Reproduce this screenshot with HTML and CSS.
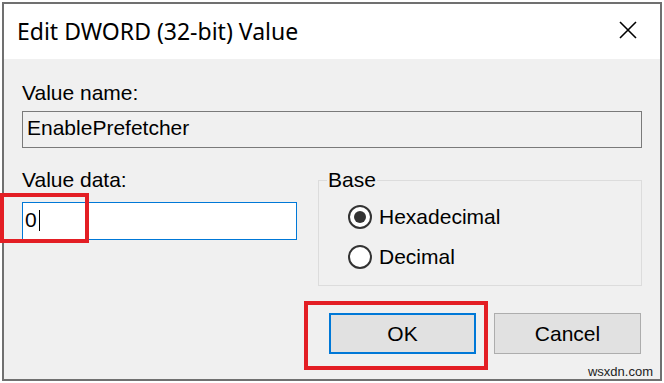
FILE: index.html
```html
<!DOCTYPE html>
<html lang="en">
<head>
  <meta charset="UTF-8">
  <meta name="viewport" content="width=device-width, initial-scale=1.0">
  <title>Edit DWORD (32-bit) Value</title>
  <link rel="stylesheet" href="styles.css">
</head>
<body>
  <div class="window">
    <div class="titlebar">
      <span class="title">Edit DWORD (32-bit) Value</span>
      <svg class="close" width="18" height="18" viewBox="0 0 18 18">
        <path d="M1 1 L17 17 M17 1 L1 17" stroke="#000" stroke-width="1.6" fill="none"/>
      </svg>
    </div>

    <div class="content">
      <div class="label">Value name:</div>
      <div class="namebox">EnablePrefetcher</div>

      <div class="row">
        <div class="datacol">
          <div class="label">Value data:</div>
          <div class="datainput"><span>0</span><span class="caret"></span></div>
        </div>
        <fieldset class="base">
          <legend>Base</legend>
          <div class="radio"><span class="dot checked"></span>Hexadecimal</div>
          <div class="radio"><span class="dot"></span>Decimal</div>
        </fieldset>
      </div>

      <div class="buttons">
        <div class="btn default">OK</div>
        <div class="btn">Cancel</div>
      </div>
    </div>

    <!-- red annotation boxes over the dialog -->
    <div class="mark mark-data"></div>
    <div class="mark mark-ok"></div>
    <div class="watermark">wsxdn.com</div>
  </div>
</body>
</html>
```

FILE: styles.css
```css
body {
  margin: 0;
  background: #fff;
  font-family: 'Liberation Sans', Arial, sans-serif;
  color: #000;
}
.window {
  position: relative;
  margin: 2px 0 0 2px;
  width: 660px;
  height: 379px;
  box-sizing: border-box;
  border: 2px solid #707070;
  background: #f0f0f0;
}
.titlebar {
  height: 55px;
  background: #fff;
  display: flex;
  align-items: center;
  justify-content: space-between;
  padding: 0 23px 0 13px;
}
.title {
  font-family: 'Noto Sans', sans-serif;
  font-size: 23px;
  padding-bottom: 2px;
}
.close {
  margin-bottom: 4px;
}
.content {
  padding: 22px 18px 0 18px;
  font-size: 21px;
}
.label {
  line-height: 24px;
}
.namebox {
  margin-top: 6px;
  height: 37px;
  box-sizing: border-box;
  border: 1px solid #7a7a7a;
  padding: 0 0 3px 4px;
  display: flex;
  align-items: center;
}
.row {
  display: flex;
  align-items: flex-start;
  margin-top: 20px;
}
.datacol {
  width: 275px;
}
.datainput {
  margin-top: 10px;
  height: 38px;
  box-sizing: border-box;
  border: 1px solid #0078d7;
  background: #fff;
  padding: 0 0 2px 2px;
  display: flex;
  align-items: center;
}
.caret {
  display: inline-block;
  width: 1px;
  height: 21px;
  background: #000;
  margin-left: 2px;
}
.base {
  margin: 0 0 0 21px;
  width: 324px;
  box-sizing: border-box;
  border: 1px solid #dcdcdc;
  padding: 13px 0 16px 29px;
  min-width: 0;
}
.base legend {
  padding: 0 1px;
  margin-left: -21px;
  line-height: 24px;
}
.radio {
  display: flex;
  align-items: center;
  height: 24px;
  gap: 7px;
}
.radio + .radio {
  margin-top: 16px;
}
.dot {
  width: 24px;
  height: 24px;
  box-sizing: border-box;
  border: 2px solid #333;
  border-radius: 50%;
  background: #fff;
  display: flex;
  align-items: center;
  justify-content: center;
}
.dot.checked::after {
  content: '';
  width: 12px;
  height: 12px;
  border-radius: 50%;
  background: #333;
}
.buttons {
  display: flex;
  justify-content: flex-end;
  gap: 18px;
  margin-top: 27px;
  margin-right: 1px;
}
.btn {
  width: 147px;
  height: 41px;
  box-sizing: border-box;
  border: 1px solid #adadad;
  background: #e1e1e1;
  display: flex;
  align-items: center;
  justify-content: center;
}
.btn.default {
  border: 2px solid #0078d7;
}
.mark {
  position: absolute;
  border: 4px solid #e31e24;
  box-sizing: border-box;
}
.mark-data {
  left: -4px;
  top: 189px;
  width: 89px;
  height: 50px;
}
.mark-ok {
  left: 300px;
  top: 297px;
  width: 184px;
  height: 69px;
}
.watermark {
  position: absolute;
  right: 7px;
  bottom: 0;
  font-size: 13px;
  line-height: 15px;
  color: #222;
}
```
